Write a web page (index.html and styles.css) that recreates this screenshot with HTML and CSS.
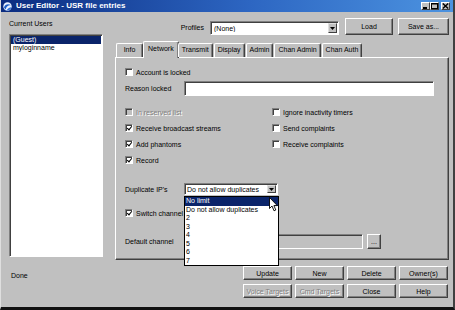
FILE: index.html
```html
<!DOCTYPE html>
<html lang="en">
<head>
  <meta charset="UTF-8">
  <title>User Editor - USR file entries</title>
  <link rel="stylesheet" href="styles.css">
</head>
<body>
<div class="window">

  <!-- barra de título -->
  <div class="titlebar">
    <svg class="app-icon" width="9" height="9" viewBox="0 0 9 9">
      <circle cx="4.5" cy="4.5" r="4.2" fill="#e8f0ff"/>
      <path d="M1 5.5 C2 2 6 1.5 8 3.5 C6 3 3.5 3.8 2.6 7.6 Z" fill="#1d5fc8"/>
      <path d="M3.5 8.5 C5 6 6.5 5.5 8.4 5.3 C7.8 7.5 6 8.6 3.5 8.5 Z" fill="#2b6fd6"/>
    </svg>
    <span class="title">User Editor - USR file entries</span>
    <div class="caption-btns">
      <span class="cap-btn"><svg width="7" height="6" viewBox="0 0 7 6"><rect x="1" y="4" width="4" height="2" fill="#000"/></svg></span>
      <span class="cap-btn"><svg width="7" height="6" viewBox="0 0 7 6"><rect x="0.5" y="0.5" width="6" height="5" fill="none" stroke="#000"/><rect x="0" y="0" width="7" height="1.5" fill="#000"/></svg></span>
      <span class="cap-btn close"><svg width="7" height="6" viewBox="0 0 7 6"><path d="M0.8 0.5 L6.2 5.5 M6.2 0.5 L0.8 5.5" stroke="#000" stroke-width="1.4"/></svg></span>
    </div>
  </div>

  <div class="main">
    <!-- columna de usuarios -->
    <div class="users">
      <div class="label">Current Users</div>
      <ul class="user-list">
        <li class="sel">(Guest)</li>
        <li>myloginname</li>
      </ul>
      <div class="status">Done</div>
    </div>

    <!-- editor -->
    <div class="editor">
      <div class="profiles">
        <span class="profiles-label">Profiles</span>
        <div class="combo profile-combo">
          <span class="combo-text">(None)</span>
          <span class="combo-arrow"><svg width="5" height="3" viewBox="0 0 5 3"><path d="M0 0 H5 L2.5 3 Z" fill="#000"/></svg></span>
        </div>
        <button class="btn load-btn">Load</button>
        <button class="btn save-btn">Save as...</button>
      </div>

      <div class="tabs">
        <span class="tab tab-info">Info</span>
        <span class="tab active">Network</span>
        <span class="tab">Transmit</span>
        <span class="tab">Display</span>
        <span class="tab">Admin</span>
        <span class="tab">Chan Admin</span>
        <span class="tab">Chan Auth</span>
      </div>

      <div class="panel">
        <div class="row">
          <span class="check"></span>
          <span>Account is locked</span>
        </div>

        <div class="row field-row reason-row">
          <span class="field-label">Reason locked</span>
          <span class="field reason-field"></span>
        </div>

        <div class="check-grid">
          <div class="row disabled"><span class="check"></span><span>In reserved list</span></div>
          <div class="row"><span class="check"></span><span>Ignore inactivity timers</span></div>
          <div class="row"><span class="check on"></span><span>Receive broadcast streams</span></div>
          <div class="row"><span class="check"></span><span>Send complaints</span></div>
          <div class="row"><span class="check on"></span><span>Add phantoms</span></div>
          <div class="row"><span class="check"></span><span>Receive complaints</span></div>
          <div class="row"><span class="check on"></span><span>Record</span></div>
        </div>

        <div class="row field-row dup-row">
          <span class="field-label">Duplicate IP's</span>
          <div class="select-wrap">
            <div class="combo dup-combo">
              <span class="combo-text">Do not allow duplicates</span>
              <span class="combo-arrow"><svg width="5" height="3" viewBox="0 0 5 3"><path d="M0 0 H5 L2.5 3 Z" fill="#000"/></svg></span>
            </div>
            <ul class="dropdown">
              <li class="sel">No limit</li>
              <li>Do not allow duplicates</li>
              <li>2</li>
              <li>3</li>
              <li>4</li>
              <li>5</li>
              <li>6</li>
              <li>7</li>
            </ul>
            <svg class="cursor" width="9" height="15" viewBox="0 0 9 15">
              <path d="M0.5 0.5 V11.5 L3 9 L5 13.8 L6.8 13 L4.9 8.6 H8.3 Z" fill="#fff" stroke="#000" stroke-width="0.9"/>
            </svg>
          </div>
        </div>

        <div class="row switch-row">
          <span class="check on"></span>
          <span>Switch channel</span>
        </div>

        <div class="row field-row chan-row">
          <span class="field-label">Default channel</span>
          <span class="field chan-field"></span>
          <button class="btn dots-btn">...</button>
        </div>
      </div>

      <div class="actions">
        <button class="btn">Update</button>
        <button class="btn">New</button>
        <button class="btn">Delete</button>
        <button class="btn">Owner(s)</button>
        <button class="btn disabled">Voice Targets</button>
        <button class="btn disabled">Cmd Targets</button>
        <button class="btn">Close</button>
        <button class="btn">Help</button>
      </div>
    </div>
  </div>
</div>
</body>
</html>
```

FILE: styles.css
```css
*{margin:0;padding:0;box-sizing:border-box;}
html,body{
  width:455px; height:310px; overflow:hidden;
  background:#c0c0c0;
  font-family:"Liberation Sans",Arial,sans-serif;
  font-size:7px; color:#000;
}
ul{list-style:none;}
button{font:inherit;color:inherit;}

.window{
  width:455px; height:310px;
  background:#c0c0c0;
  border-left:1px solid #dfdfdf;
  border-right:2px solid #404040;
  border-bottom:3px solid #111;
}

/* barra de título */
.titlebar{
  height:12px; display:flex; align-items:center;
  padding:0 2px 0 2px;
  background:linear-gradient(90deg,#0b2c80,#2d66c2 55%,#4c93e0);
  color:#fff;
}
.app-icon{margin-right:4px;flex:none;}
.title{font-size:8px;font-weight:bold;line-height:12px;white-space:nowrap;}
.caption-btns{margin-left:auto;display:flex;gap:0;padding-right:1px;}
.cap-btn{
  width:9px; height:8px; display:flex; align-items:center; justify-content:center;
  background:#c0c0c0;
  border:1px solid; border-color:#fff #404040 #404040 #fff;
}
.cap-btn.close{margin-left:2px;}

.main{
  display:grid; grid-template-columns:94px 334px; column-gap:12px;
  padding:6px 0 0 8px;
}

/* usuarios */
.users{display:flex;flex-direction:column;}
.label{line-height:10px;margin-top:1px;}
.user-list{
  margin-top:5px; height:223px;
  background:#fff;
  border:1px solid; border-color:#808080 #fff #fff #808080;
  box-shadow:inset 1px 1px #404040;
  padding:1px 0 0 1px;
}
.user-list li{line-height:8px;padding-left:2px;white-space:nowrap;}
.user-list li.sel{background:#0a246a;color:#fff;margin-right:1px;}
.status{margin-top:14px;line-height:10px;padding-left:2px;}

/* controles comunes */
.btn{
  display:flex; align-items:center; justify-content:center;
  background:#c0c0c0;
  border:1px solid; border-color:#fff #404040 #404040 #fff;
  box-shadow:inset -1px -1px #808080;
  line-height:1; white-space:nowrap;
}
.btn.disabled{color:#808080;text-shadow:1px 1px 0 #fff;}

.combo,.field{
  display:flex; align-items:center;
  background:#fff;
  border:1px solid; border-color:#808080 #fff #fff #808080;
  box-shadow:inset 1px 1px #404040;
}
.combo-text{flex:1;padding-left:3px;white-space:nowrap;overflow:hidden;}
.combo-arrow{
  width:9px; align-self:stretch; margin:1px 1px 1px 0;
  display:flex; align-items:center; justify-content:center;
  background:#c0c0c0;
  border:1px solid; border-color:#dfdfdf #404040 #404040 #dfdfdf;
}

/* perfiles */
.profiles{display:flex;justify-content:flex-end;align-items:flex-end;height:17px;}
.profiles-label{line-height:14px;margin-right:6px;}
.profile-combo{width:129px;height:14px;margin-right:6px;}
.load-btn{width:48px;height:17px;margin-right:5px;}
.save-btn{width:51px;height:17px;}

/* pestañas */
.tabs{display:flex;align-items:flex-end;height:16px;margin-top:6px;padding-left:1px;position:relative;z-index:1;}
.tab{
  height:14px; padding:0 3px; line-height:12px;
  border:1px solid; border-bottom:none;
  border-color:#fff #404040 #404040 #fff;
  border-radius:2px 2px 0 0;
  box-shadow:inset -1px 0 #808080;
  white-space:nowrap; margin-right:1px;
}
.tab-info{min-width:27px;text-align:center;}
.tab.active{
  height:17px; margin:0 -1px -1px -1px; padding:0 4px;
  line-height:13px; background:#c0c0c0;
}

/* panel */
.panel{
  height:203px;
  border:1px solid; border-color:#fff #404040 #404040 #fff;
  box-shadow:inset -1px -1px #808080;
  padding:9px 0 0 9px;
}
.row{display:flex;align-items:center;height:10px;white-space:nowrap;}
.check{
  width:8px; height:8px; margin-right:3px; flex:none;
  background:#fff;
  border:1px solid; border-color:#808080 #fff #fff #808080;
  box-shadow:inset 1px 1px #404040;
  position:relative;
}
.check.on::after{
  content:""; position:absolute; left:1px; top:0px;
  width:2px; height:4px;
  border:solid #000; border-width:0 1.5px 1.5px 0;
  transform:translate(1px,0) rotate(40deg);
}
.row.disabled{color:#808080;text-shadow:1px 1px 0 #fff;}
.row.disabled .check{background:#c0c0c0;}

.field-label{width:59px;flex:none;}
.reason-row{margin-top:4px;height:15px;}
.reason-field{width:250px;height:15px;}

.check-grid{
  display:grid; grid-template-columns:147px auto;
  grid-auto-rows:16px; align-items:center;
  margin-top:8px;
}

.dup-row{margin-top:15px;height:12px;}
.select-wrap{position:relative;}
.dup-combo{width:94px;height:12px;}
.dup-combo .combo-text{padding-left:2px;}
.dropdown{
  position:absolute; left:0; top:13px; z-index:5;
  width:95px; height:70px;
  background:#fff; border:1px solid #000;
}
.dropdown li{height:8.5px;line-height:8.5px;padding-left:1px;white-space:nowrap;}
.dropdown li.sel{background:#0a246a;color:#fff;}
.cursor{position:absolute;left:85px;top:14px;z-index:6;}

.switch-row{margin-top:13px;}

.chan-row{margin-top:16px;height:15px;}
.chan-field{width:179px;height:15px;background:#c0c0c0;}
.dots-btn{width:14px;height:15px;margin-left:4px;}

/* botones inferiores */
.actions{
  display:grid; grid-template-columns:repeat(4,49px);
  grid-auto-rows:14px; column-gap:3px; row-gap:4px;
  justify-content:end; margin:6px 1px 0 0;
}
```
